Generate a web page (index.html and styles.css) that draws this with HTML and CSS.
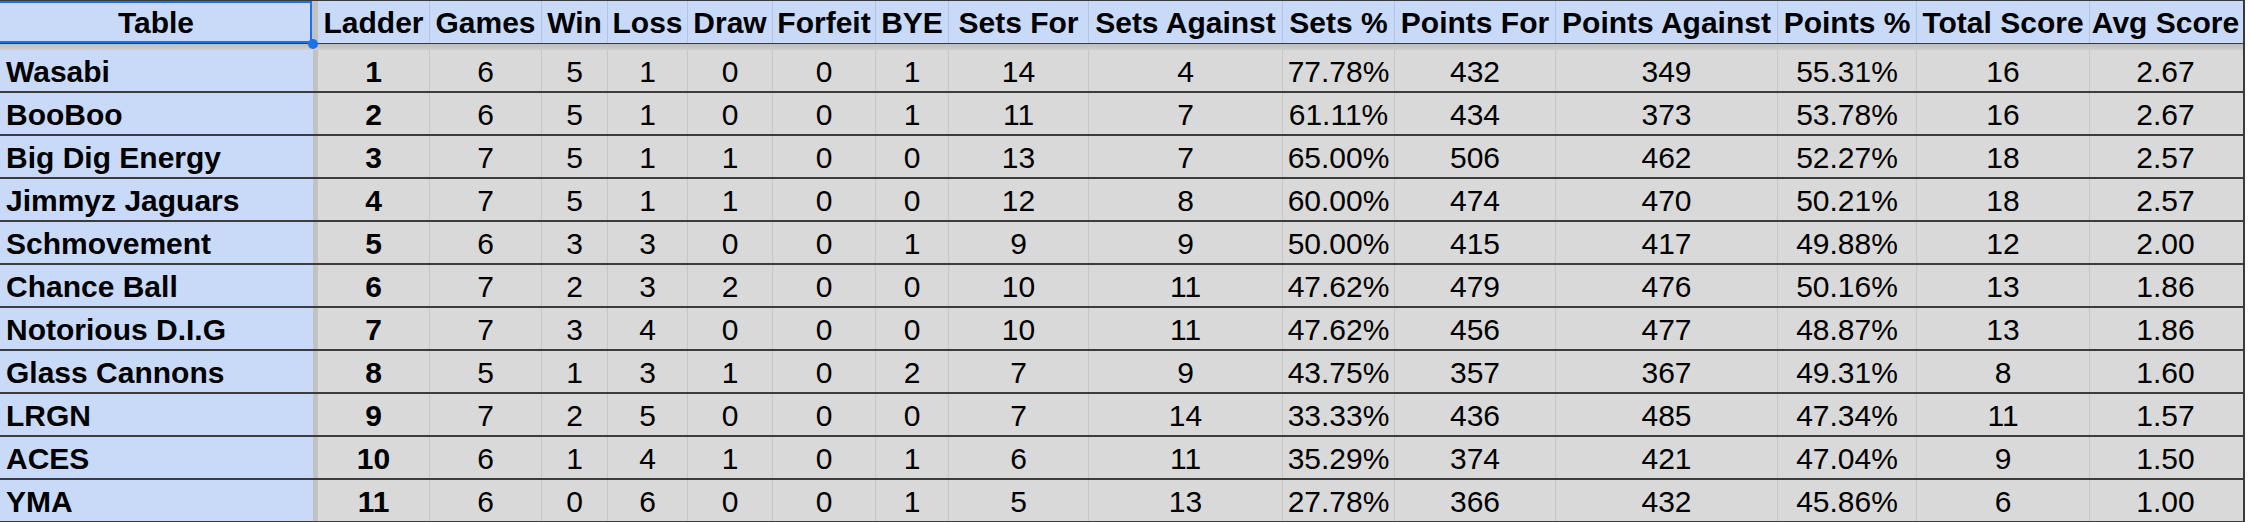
FILE: index.html
```html
<!DOCTYPE html>
<html>
<head>
<meta charset="utf-8">
<link rel="stylesheet" href="styles.css">
</head>
<body>
<div class="sheet">
  <div class="row head">
    <div class="c name-h sel">Table<span class="dot"></span></div><div class="fz"></div>
    <div class="c">Ladder</div><div class="c">Games</div><div class="c">Win</div><div class="c">Loss</div><div class="c">Draw</div><div class="c">Forfeit</div><div class="c">BYE</div><div class="c">Sets For</div><div class="c">Sets Against</div><div class="c">Sets %</div><div class="c">Points For</div><div class="c">Points Against</div><div class="c">Points %</div><div class="c">Total Score</div><div class="c last">Avg Score</div>
  </div>
  <div class="strip"></div>
  <div class="row data">
    <div class="name">Wasabi</div><div class="fz"></div>
    <div class="c b">1</div><div class="c">6</div><div class="c">5</div><div class="c">1</div><div class="c">0</div><div class="c">0</div><div class="c">1</div><div class="c">14</div><div class="c">4</div><div class="c">77.78%</div><div class="c">432</div><div class="c">349</div><div class="c">55.31%</div><div class="c">16</div><div class="c last">2.67</div>
  </div>
  <div class="row data">
    <div class="name">BooBoo</div><div class="fz"></div>
    <div class="c b">2</div><div class="c">6</div><div class="c">5</div><div class="c">1</div><div class="c">0</div><div class="c">0</div><div class="c">1</div><div class="c">11</div><div class="c">7</div><div class="c">61.11%</div><div class="c">434</div><div class="c">373</div><div class="c">53.78%</div><div class="c">16</div><div class="c last">2.67</div>
  </div>
  <div class="row data">
    <div class="name">Big Dig Energy</div><div class="fz"></div>
    <div class="c b">3</div><div class="c">7</div><div class="c">5</div><div class="c">1</div><div class="c">1</div><div class="c">0</div><div class="c">0</div><div class="c">13</div><div class="c">7</div><div class="c">65.00%</div><div class="c">506</div><div class="c">462</div><div class="c">52.27%</div><div class="c">18</div><div class="c last">2.57</div>
  </div>
  <div class="row data">
    <div class="name">Jimmyz Jaguars</div><div class="fz"></div>
    <div class="c b">4</div><div class="c">7</div><div class="c">5</div><div class="c">1</div><div class="c">1</div><div class="c">0</div><div class="c">0</div><div class="c">12</div><div class="c">8</div><div class="c">60.00%</div><div class="c">474</div><div class="c">470</div><div class="c">50.21%</div><div class="c">18</div><div class="c last">2.57</div>
  </div>
  <div class="row data">
    <div class="name">Schmovement</div><div class="fz"></div>
    <div class="c b">5</div><div class="c">6</div><div class="c">3</div><div class="c">3</div><div class="c">0</div><div class="c">0</div><div class="c">1</div><div class="c">9</div><div class="c">9</div><div class="c">50.00%</div><div class="c">415</div><div class="c">417</div><div class="c">49.88%</div><div class="c">12</div><div class="c last">2.00</div>
  </div>
  <div class="row data">
    <div class="name">Chance Ball</div><div class="fz"></div>
    <div class="c b">6</div><div class="c">7</div><div class="c">2</div><div class="c">3</div><div class="c">2</div><div class="c">0</div><div class="c">0</div><div class="c">10</div><div class="c">11</div><div class="c">47.62%</div><div class="c">479</div><div class="c">476</div><div class="c">50.16%</div><div class="c">13</div><div class="c last">1.86</div>
  </div>
  <div class="row data">
    <div class="name">Notorious D.I.G</div><div class="fz"></div>
    <div class="c b">7</div><div class="c">7</div><div class="c">3</div><div class="c">4</div><div class="c">0</div><div class="c">0</div><div class="c">0</div><div class="c">10</div><div class="c">11</div><div class="c">47.62%</div><div class="c">456</div><div class="c">477</div><div class="c">48.87%</div><div class="c">13</div><div class="c last">1.86</div>
  </div>
  <div class="row data">
    <div class="name">Glass Cannons</div><div class="fz"></div>
    <div class="c b">8</div><div class="c">5</div><div class="c">1</div><div class="c">3</div><div class="c">1</div><div class="c">0</div><div class="c">2</div><div class="c">7</div><div class="c">9</div><div class="c">43.75%</div><div class="c">357</div><div class="c">367</div><div class="c">49.31%</div><div class="c">8</div><div class="c last">1.60</div>
  </div>
  <div class="row data">
    <div class="name">LRGN</div><div class="fz"></div>
    <div class="c b">9</div><div class="c">7</div><div class="c">2</div><div class="c">5</div><div class="c">0</div><div class="c">0</div><div class="c">0</div><div class="c">7</div><div class="c">14</div><div class="c">33.33%</div><div class="c">436</div><div class="c">485</div><div class="c">47.34%</div><div class="c">11</div><div class="c last">1.57</div>
  </div>
  <div class="row data">
    <div class="name">ACES</div><div class="fz"></div>
    <div class="c b">10</div><div class="c">6</div><div class="c">1</div><div class="c">4</div><div class="c">1</div><div class="c">0</div><div class="c">1</div><div class="c">6</div><div class="c">11</div><div class="c">35.29%</div><div class="c">374</div><div class="c">421</div><div class="c">47.04%</div><div class="c">9</div><div class="c last">1.50</div>
  </div>
  <div class="row data">
    <div class="name">YMA</div><div class="fz"></div>
    <div class="c b">11</div><div class="c">6</div><div class="c">0</div><div class="c">6</div><div class="c">0</div><div class="c">0</div><div class="c">1</div><div class="c">5</div><div class="c">13</div><div class="c">27.78%</div><div class="c">366</div><div class="c">432</div><div class="c">45.86%</div><div class="c">6</div><div class="c last">1.00</div>
  </div>
</div>
</body>
</html>
```

FILE: styles.css
```css
html, body {
  margin: 0;
  padding: 0;
  background: #ffffff;
  width: 2250px;
  height: 522px;
  overflow: hidden;
}

.sheet {
  width: 2245px;
  font-family: "Liberation Sans", Arial, sans-serif;
  font-size: 30px;
  color: #000;
  border-right: 2px solid #3a3a3a;
  box-sizing: border-box;
}

.row {
  display: grid;
  grid-template-columns: 313px 5px 112px 112px 66px 80px 85px 103px 73px 140px 194px 112px 161px 222px 139px 173px 151px;
  box-sizing: border-box;
}

.head {
  height: 44px;
  border-top: 1px solid #3a3a3a;
  border-bottom: 1px solid #3a3a3a;
  background: #c9daf8;
  font-weight: bold;
}

.head .c {
  height: 42px;
  line-height: 40px;
  padding-top: 2px;
  border-right: 1px solid #b4c4e0;
}

.head .last {
  border-right: none;
}

.name-h {
  position: relative;
  text-align: center;
  background: #c9daf8;
}

.sel {
  box-shadow: inset 0 2px 0 #1a73e8, inset -2px -2px 0 #1a73e8;
}

.dot {
  position: absolute;
  right: -6px;
  bottom: -6px;
  width: 10px;
  height: 10px;
  border-radius: 50%;
  background: #1a73e8;
  z-index: 2;
}

.strip {
  height: 6px;
  background: linear-gradient(#bdbdbd, #cfcfcf);
}

.fz {
  background: #c2c2c2;
}

.data {
  height: 43px;
  border-bottom: 2px solid #3c3c3c;
  background: #d9d9d9;
}

.c {
  box-sizing: border-box;
  text-align: center;
  white-space: nowrap;
  overflow: visible;
}

.data .c {
  height: 41px;
  line-height: 38px;
  padding-top: 3px;
  border-right: 1px solid #c6c6c6;
}

.data .last {
  border-right: none;
}

.name {
  background: #c9daf8;
  font-weight: bold;
  padding-left: 6px;
  height: 41px;
  line-height: 38px;
  padding-top: 3px;
  box-sizing: border-box;
  white-space: nowrap;
}

.b {
  font-weight: bold;
}
```
